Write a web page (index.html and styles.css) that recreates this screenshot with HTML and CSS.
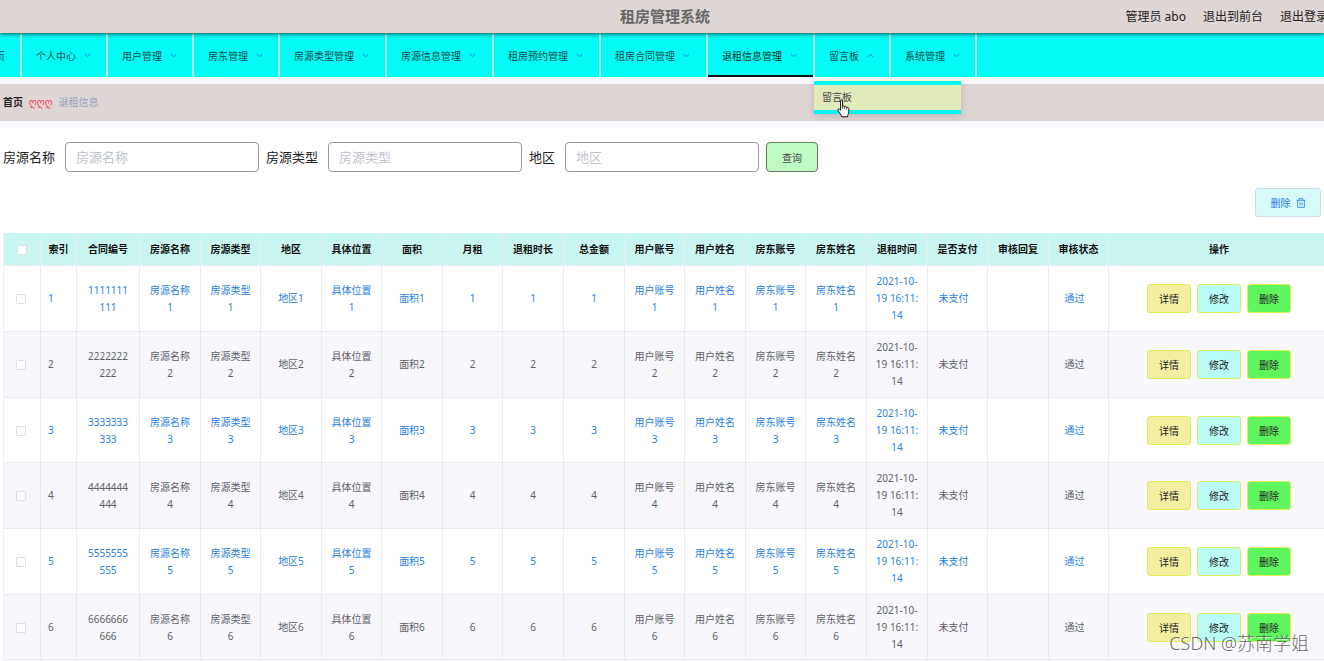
FILE: index.html
```html
<!DOCTYPE html>
<html lang="zh-CN">
<head>
<meta charset="utf-8">
<title>租房管理系统</title>
<link rel="stylesheet" href="styles.css">
</head>
<body>
<svg class="defs" aria-hidden="true">
  <symbol id="arrow" viewBox="0 0 7 5"><path d="M0.7 0.8 3.5 3.8 6.3 0.8" fill="none" stroke="#1f86ee" stroke-width="1"/></symbol>
</svg>
<header class="topbar">
  <h1 class="title">租房管理系统</h1>
  <div class="account">
    <span>管理员 abo</span>
    <a href="#">退出到前台</a>
    <a href="#">退出登录</a>
  </div>
</header>
<nav>
  <ul class="menu">
    <li class="item home"><button type="button">首页</button></li>
    <li class="item"><button type="button">个人中心<svg class="arrow"><use href="#arrow"/></svg></button></li>
    <li class="item"><button type="button">用户管理<svg class="arrow"><use href="#arrow"/></svg></button></li>
    <li class="item"><button type="button">房东管理<svg class="arrow"><use href="#arrow"/></svg></button></li>
    <li class="item wide"><button type="button">房源类型管理<svg class="arrow"><use href="#arrow"/></svg></button></li>
    <li class="item wide"><button type="button">房源信息管理<svg class="arrow"><use href="#arrow"/></svg></button></li>
    <li class="item wide"><button type="button">租房预约管理<svg class="arrow"><use href="#arrow"/></svg></button></li>
    <li class="item wide"><button type="button">租房合同管理<svg class="arrow"><use href="#arrow"/></svg></button></li>
    <li class="item wide active"><button type="button">退租信息管理<svg class="arrow"><use href="#arrow"/></svg></button></li>
    <li class="item open"><button type="button">留言板<svg class="arrow up"><use href="#arrow"/></svg></button>
      <div class="dropdown">
        <a href="#">留言板</a>
        <svg class="cursor" viewBox="0 0 13 19"><path d="M3.6 1.8C3.6.4 5.6.4 5.6 1.8V7.4C6.2 6.7 7.4 6.9 7.6 7.8 8.3 7.2 9.5 7.5 9.7 8.5 10.6 8 11.8 8.6 11.8 9.8V13C11.8 14.8 10.6 15.6 10.5 17.8H4.8C4.5 16 2 13.6 1 11.3.4 10 1.7 9.2 2.6 10.2L3.6 11.4Z" fill="#fff" stroke="#111" stroke-width="1"/><path d="M5.6 7.4V10M7.6 7.8V10.2M9.7 8.5V10.5" stroke="#111" stroke-width="0.7"/></svg>
      </div>
    </li>
    <li class="item last"><button type="button">系统管理<svg class="arrow"><use href="#arrow"/></svg></button></li>
  </ul>
</nav>
<div class="crumbs"><b>首页</b><span class="sep">ღღღ</span><span class="here">退租信息</span></div>
<main>
  <form class="search">
    <label for="name">房源名称</label><input id="name" type="text" placeholder="房源名称">
    <label for="type">房源类型</label><input id="type" type="text" placeholder="房源类型">
    <label for="area">地区</label><input id="area" type="text" placeholder="地区">
    <button type="button" class="query">查询</button>
  </form>
  <div class="tools">
    <button type="button" class="remove">删除
      <svg class="trash" viewBox="0 0 10 10"><path d="M0.5 2.3H9.5M3.2 2.3V0.6H6.8V2.3M1.6 2.3V9.4H8.4V2.3M4 4.2V7.4M6 4.2V7.4" fill="none" stroke="currentColor" stroke-width="0.8"/></svg>
    </button>
  </div>
  <div class="table-wrap">
    <table>
      <colgroup>
        <col class="c-check"><col class="c-index"><col class="c-no">
        <col class="c-a"><col class="c-b"><col class="c-a"><col class="c-b">
        <col class="c-a"><col class="c-b"><col class="c-a"><col class="c-a">
        <col class="c-b"><col class="c-a"><col class="c-b"><col class="c-a">
        <col class="c-a"><col class="c-b"><col class="c-a"><col class="c-b">
        <col>
      </colgroup>
      <thead>
        <tr>
          <th><input type="checkbox" aria-label="全选"></th>
          <th>索引</th><th>合同编号</th><th>房源名称</th><th>房源类型</th><th>地区</th><th>具体位置</th><th>面积</th><th>月租</th><th>退租时长</th><th>总金额</th><th>用户账号</th><th>用户姓名</th><th>房东账号</th><th>房东姓名</th><th>退租时间</th><th>是否支付</th><th>审核回复</th><th>审核状态</th><th>操作</th>
        </tr>
      </thead>
      <tbody id="rows"></tbody>
    </table>
  </div>
</main>
<div class="watermark">CSDN @苏南学姐</div>
<script src="rows.js"></script>
</body>
</html>
```
FILE: rows.js
```js
const body = document.getElementById('rows');
for (let n = 1; n <= 6; n++) {
  const cells = ['房源名称' + n, '房源类型' + n, '地区' + n, '具体位置' + n, '面积' + n, n, n, n,
    '用户账号' + n, '用户姓名' + n, '房东账号' + n, '房东姓名' + n, '2021-10-19 16:11:14'];
  const tr = document.createElement('tr');
  tr.innerHTML =
    `<td><input type="checkbox" aria-label="${n}"></td>` +
    `<td class="index">${n}</td>` +
    `<td class="number">${String(n).repeat(10)}</td>` +
    cells.map(c => `<td>${c}</td>`).join('') +
    '<td class="tag">未支付</td><td></td><td class="tag">通过</td>' +
    '<td><div class="actions"><button type="button" class="detail">详情</button>' +
    '<button type="button" class="edit">修改</button>' +
    '<button type="button" class="delete">删除</button></div></td>';
  body.appendChild(tr);
}
```
FILE: styles.css
```css
* { box-sizing: border-box; }
body {
  margin: 0;
  overflow-x: hidden;
  position: relative;
  background: #f9f9fd;
  color: #222;
  font: 10px/17px "Noto Sans", "Noto Sans CJK SC", sans-serif;
}
button, input { font-family: inherit; margin: 0; }
button { cursor: pointer; }
a { color: inherit; text-decoration: none; }
.defs { position: absolute; width: 0; height: 0; }

.topbar {
  position: relative;
  z-index: 1;
  display: grid;
  grid-template-columns: 1fr auto 1fr;
  align-items: center;
  height: 33px;
  padding-left: 6px;
  background: #ded5d5;
  box-shadow: 0 1px 4px rgba(0, 0, 0, .7);
}
.title { grid-column: 2; margin: 0; font-size: 15px; line-height: 31px; color: #666; }
.account {
  display: flex;
  justify-content: flex-end;
  gap: 17px;
  margin-right: -4px;
  font-size: 12px;
  line-height: 30px;
  white-space: nowrap;
}

.menu {
  display: flex;
  height: 44px;
  margin: 0;
  padding: 0;
  list-style: none;
  background: #04fbf5;
}
.item { position: relative; flex: none; border-left: 2px solid #b4f4f4; }
.item button {
  display: flex;
  align-items: center;
  width: 100%;
  height: 44px;
  padding: 0 15px 0 14px;
  border: 0;
  background: none;
  color: #154c4c;
  font-size: 10px;
  white-space: nowrap;
}
.home { margin-left: -31px; border-left: 0; }
.home button { padding: 0 15px 0 16px; }
.wide { width: 107px; }
.last { border-right: 2px solid #b4f4f4; }
.active button { border-bottom: 2px solid #111; padding-top: 2px; color: #032; }
.arrow { width: 7px; height: 5px; margin-left: 8px; }
.up { transform: rotate(180deg); }
.dropdown {
  position: absolute;
  z-index: 2;
  top: 48px;
  left: -1px;
  width: 147px;
  border: solid #04f6f4;
  border-width: 4px 0;
  background: #e1ebba;
  box-shadow: 0 2px 8px rgba(0, 0, 0, .15);
}
.dropdown a { display: block; padding: 0 8px; line-height: 25px; color: #444; }
.cursor { position: absolute; top: 14px; left: 23px; width: 13px; height: 19px; }

.crumbs {
  display: flex;
  align-items: center;
  gap: 6px;
  height: 37px;
  margin: 7px 0;
  padding-left: 3px;
  background: #ded5d5;
}
.sep { font-family: "DejaVu Sans", sans-serif; font-size: 10px; color: #ff3d63; }
.here { color: #97a3bd; }

main { padding: 14px 3px 0; background: #fff; }
.search { display: flex; align-items: center; }
.search label { margin-right: 10px; font-size: 13px; }
.search input {
  width: 194px;
  height: 30px;
  margin-right: 7px;
  padding: 0 10px;
  border: 1px solid #999;
  border-radius: 4px;
  font-size: 13px;
}
.search input::placeholder { color: #c0c4cc; }
.query {
  width: 52px;
  height: 30px;
  padding: 0;
  border: 1px solid #5d7a61;
  border-radius: 4px;
  background: #bffcc3;
  color: #444;
  font-size: 10px;
}
.tools { display: flex; justify-content: flex-end; padding: 16px 0; }
.remove {
  display: flex;
  align-items: center;
  justify-content: center;
  gap: 5px;
  width: 66px;
  height: 29px;
  padding: 0;
  border: 1px solid #cfdbe8;
  border-radius: 3px;
  background: #d5faf8;
  color: #2a80e0;
  font-size: 10px;
}
.trash { width: 10px; height: 10px; }

.table-wrap { margin-right: -3px; overflow: hidden; }
table {
  width: calc(100% + 6px);
  table-layout: fixed;
  border-collapse: separate;
  border-spacing: 0;
  border-left: 1px solid #ebeef5;
}
.c-check { width: 37px; }
.c-index { width: 36px; }
.c-no { width: 63px; }
.c-a { width: 61px; }
.c-b { width: 60px; }
th, td {
  border-right: 1px solid #ebebf2;
  border-bottom: 1px solid #ebebf2;
  text-align: center;
  vertical-align: middle;
}
th {
  height: 33px;
  padding: 1px 0 0;
  background: #c9f6f1;
  color: #111;
}
td { height: 66px; padding: 7px 8px; color: #606266; word-break: break-all; }
tbody tr:nth-child(3n) td { height: 65px; padding-bottom: 6px; }
tbody tr:nth-child(odd) td { background: #fff; color: #2a80dc; }
tbody tr:nth-child(even) td { background: #f7f7fc; }
td.index { padding-left: 7px; text-align: left; }
td.number { padding-left: 10px; padding-right: 10px; }
td.tag { padding-left: 7px; padding-right: 15px; }
td:first-child { padding-right: 10px; }
table input {
  appearance: none;
  display: block;
  width: 10px;
  height: 10px;
  margin: 0 auto;
  border: 1px solid #dcdfe6;
  border-radius: 1px;
  background: #fff;
}
.actions { display: flex; justify-content: center; gap: 6px; }
.actions button {
  width: 44px;
  height: 29px;
  padding: 0;
  border: 1px solid #dfec57;
  border-radius: 3px;
  color: #222;
  font-size: 10px;
}
.actions .detail { background: #f2f0a0; }
.actions .edit { background: #b9fcf5; }
.actions .delete { background: #5ff55f; }
.watermark {
  position: absolute;
  right: 15px;
  bottom: 4px;
  font-size: 18px;
  line-height: 26px;
  font-weight: 300;
  color: rgba(90, 90, 90, .9);
  text-shadow: 1px 1px 0 rgba(255, 255, 255, .6);
}
```
